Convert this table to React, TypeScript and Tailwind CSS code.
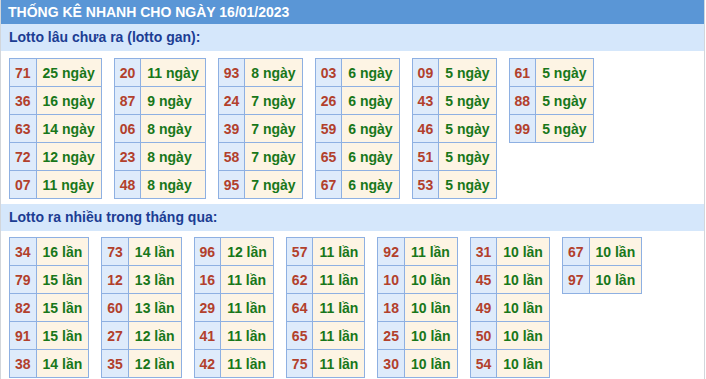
const gan: [string, string][][] = [
  [['71', '25'], ['36', '16'], ['63', '14'], ['72', '12'], ['07', '11']],
  [['20', '11'], ['87', '9'], ['06', '8'], ['23', '8'], ['48', '8']],
  [['93', '8'], ['24', '7'], ['39', '7'], ['58', '7'], ['95', '7']],
  [['03', '6'], ['26', '6'], ['59', '6'], ['65', '6'], ['67', '6']],
  [['09', '5'], ['43', '5'], ['46', '5'], ['51', '5'], ['53', '5']],
  [['61', '5'], ['88', '5'], ['99', '5']],
];

const nhieu: [string, string][][] = [
  [['34', '16'], ['79', '15'], ['82', '15'], ['91', '15'], ['38', '14']],
  [['73', '14'], ['12', '13'], ['60', '13'], ['27', '12'], ['35', '12']],
  [['96', '12'], ['16', '11'], ['29', '11'], ['41', '11'], ['42', '11']],
  [['57', '11'], ['62', '11'], ['64', '11'], ['65', '11'], ['75', '11']],
  [['92', '11'], ['10', '10'], ['18', '10'], ['25', '10'], ['30', '10']],
  [['31', '10'], ['45', '10'], ['49', '10'], ['50', '10'], ['54', '10']],
  [['67', '10'], ['97', '10']],
];

function LotoTable({ rows, unit }: { rows: [string, string][]; unit: string }) {
  return (
    <table className="border-collapse self-start">
      <tbody>
        {rows.map(([num, count]) => (
          <tr key={num} className="h-[28px]">
            <td className="border border-[#8eb0e2] bg-[#deebfb] px-[5px] text-[#b2402c]">{num}</td>
            <td className="border border-[#8eb0e2] bg-[#fdf4e4] px-[6px] text-[#18771a]">
              {count} {unit}
            </td>
          </tr>
        ))}
      </tbody>
    </table>
  );
}

function Section({
  title,
  tables,
  unit,
  top,
}: {
  title: string;
  tables: [string, string][][];
  unit: string;
  top: string;
}) {
  return (
    <div>
      <div className="h-[27px] bg-[#d5e7fb] px-[8px] text-[14px] leading-[27px] font-bold text-[#1c3d93]">
        {title}
      </div>
      <div className={`flex flex-wrap gap-x-[12px] px-[8px] pb-[5px] text-[14px] leading-[16px] font-bold ${top}`}>
        {tables.map((t, i) => (
          <LotoTable key={i} rows={t} unit={unit} />
        ))}
      </div>
    </div>
  );
}

export default function App() {
  return (
    <div
      className="w-[705px] h-[379px] overflow-hidden border-x border-[#d2d6db] bg-white"
      style={{ fontFamily: '"Liberation Sans", Arial, sans-serif' }}
    >
      <div className="h-[24px] bg-[#5a96d6] px-[7px] text-[14px] leading-[24px] font-bold text-white">
        THỐNG KÊ NHANH CHO NGÀY 16/01/2023
      </div>
      <Section title="Lotto lâu chưa ra (lotto gan):" tables={gan} unit="ngày" top="pt-[7px]" />
      <Section title="Lotto ra nhiều trong tháng qua:" tables={nhieu} unit="lần" top="pt-[6px]" />
    </div>
  );
}
